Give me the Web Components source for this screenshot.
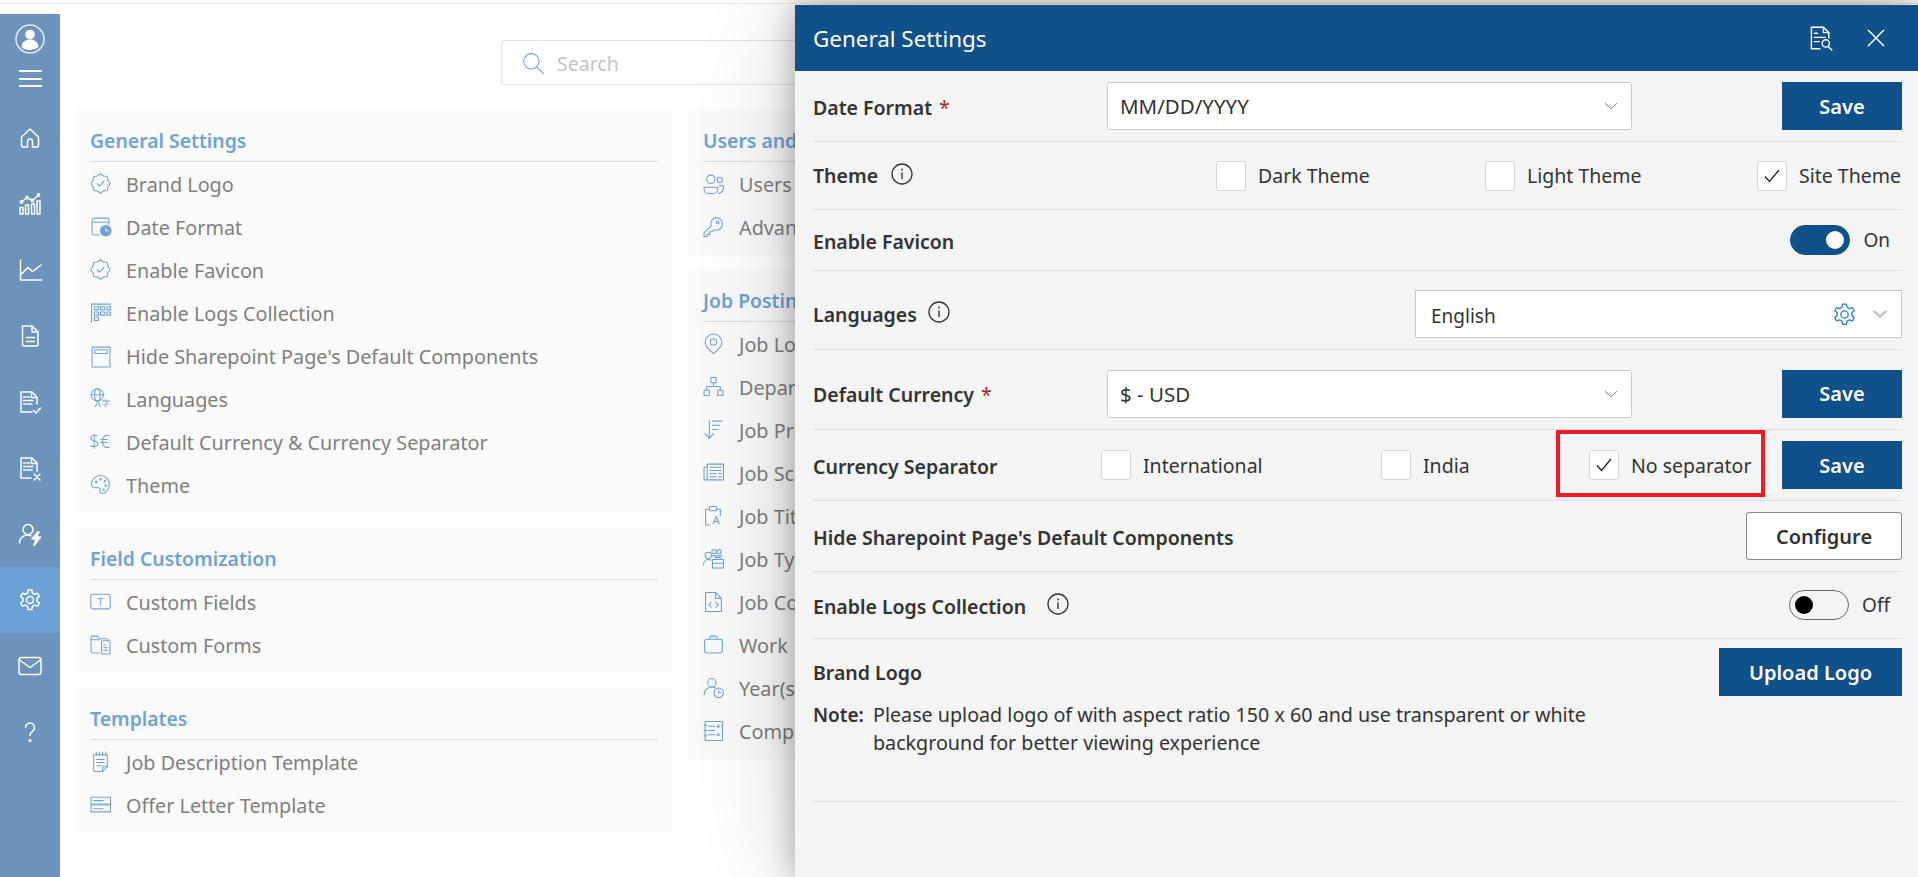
<!DOCTYPE html>
<html>
<head>
<meta charset="utf-8">
<title>General Settings</title>
<style>
	html, body { margin: 0; height: 100%; overflow: hidden; background: #fff; }
	body { font-family: "Noto Sans", "Open Sans", sans-serif; font-size: 19px; color: #333; }
</style>
</head>
<body>
<app-shell>
	<app-sidebar slot="side">
		<nav-item icon="home"></nav-item>
		<nav-item icon="bars"></nav-item>
		<nav-item icon="trend"></nav-item>
		<nav-item icon="doc"></nav-item>
		<nav-item icon="docCheck"></nav-item>
		<nav-item icon="docX"></nav-item>
		<nav-item icon="userBolt"></nav-item>
		<nav-item icon="gear" active></nav-item>
		<nav-item icon="mail"></nav-item>
		<nav-item icon="help"></nav-item>
	</app-sidebar>

	<search-box placeholder="Search"></search-box>

	<card-columns>
		<div>
			<settings-card heading="General Settings">
				<settings-link icon="badge">Brand Logo</settings-link>
				<settings-link icon="calClock">Date Format</settings-link>
				<settings-link icon="badge">Enable Favicon</settings-link>
				<settings-link icon="logs">Enable Logs Collection</settings-link>
				<settings-link icon="window">Hide Sharepoint Page's Default Components</settings-link>
				<settings-link icon="lang">Languages</settings-link>
				<settings-link icon="currency">Default Currency &amp; Currency Separator</settings-link>
				<settings-link icon="palette">Theme</settings-link>
			</settings-card>
			<settings-card heading="Field Customization">
				<settings-link icon="textBox">Custom Fields</settings-link>
				<settings-link icon="folderForm">Custom Forms</settings-link>
			</settings-card>
			<settings-card heading="Templates">
				<settings-link icon="note">Job Description Template</settings-link>
				<settings-link icon="letter">Offer Letter Template</settings-link>
			</settings-card>
		</div>
		<div>
			<settings-card heading="Users and Roles">
				<settings-link icon="users">Users</settings-link>
				<settings-link icon="key">Advanced</settings-link>
			</settings-card>
			<settings-card heading="Job Posting">
				<settings-link icon="pin">Job Location</settings-link>
				<settings-link icon="org">Department</settings-link>
				<settings-link icon="sort">Job Priority</settings-link>
				<settings-link icon="news">Job Schedule</settings-link>
				<settings-link icon="clipA">Job Title</settings-link>
				<settings-link icon="team">Job Type</settings-link>
				<settings-link icon="code">Job Code</settings-link>
				<settings-link icon="case">Work</settings-link>
				<settings-link icon="userClock">Year(s)</settings-link>
				<settings-link icon="book">Company</settings-link>
			</settings-card>
		</div>
	</card-columns>

	<settings-dialog slot="overlay" heading="General Settings">
		<setting-row style="height:71px; grid-template-columns:294px 525px 1fr">
			<b>Date Format<req-mark></req-mark></b>
			<select-box>MM/DD/YYYY</select-box>
			<action-button>Save</action-button>
		</setting-row>
		<setting-row style="height:68px; grid-template-columns:403px 269px 272px 1fr">
			<b style="padding-top:0">Theme<info-dot></info-dot></b>
			<check-option>Dark Theme</check-option>
			<check-option>Light Theme</check-option>
			<check-option checked>Site Theme</check-option>
		</setting-row>
		<setting-row style="height:61px; grid-template-columns:1fr auto">
			<b>Enable Favicon</b>
			<toggle-switch on>On</toggle-switch>
		</setting-row>
		<setting-row style="height:79px; padding-top:8px; grid-template-columns:602px 1fr">
			<b style="padding-top:0">Languages<info-dot style="margin-left:11px"></info-dot></b>
			<language-box>English</language-box>
		</setting-row>
		<setting-row style="height:80px; padding-top:8px; grid-template-columns:294px 525px 1fr">
			<b>Default Currency<req-mark></req-mark></b>
			<select-box>$ - USD</select-box>
			<action-button>Save</action-button>
		</setting-row>
		<setting-row style="height:71px; grid-template-columns:288px 280px 208px 193px 120px">
			<b>Currency Separator</b>
			<check-option>International</check-option>
			<check-option>India</check-option>
			<check-option checked marked>No separator</check-option>
			<action-button>Save</action-button>
		</setting-row>
		<setting-row style="height:71px; grid-template-columns:1fr auto">
			<b>Hide Sharepoint Page's Default Components</b>
			<action-button outline>Configure</action-button>
		</setting-row>
		<setting-row style="height:67px; grid-template-columns:1fr auto">
			<b>Enable Logs Collection<info-dot style="margin-left:21px"></info-dot></b>
			<toggle-switch>Off</toggle-switch>
		</setting-row>
		<brand-row></brand-row>
	</settings-dialog>
</app-shell>

<script>
	// stroke icons, all drawn in a 20 x 20 box unless the entry says otherwise
	function scallop() {
		let d = 'M';
		for(let i = 0; i < 16; i++) {
			let a = (i * Math.PI) / 8 - Math.PI / 2;
			let r = i % 2 ? 7.7 : 9.3;
			d += (10 + r * Math.cos(a)).toFixed(2) + ' ' + (10 + r * Math.sin(a)).toFixed(2) + (i < 15 ? 'L' : 'Z');
		}
		return d;
	}

	const ICONS = {
		home: '<path d="M3.5 11 12 3l8.5 8v8.5A1.5 1.5 0 0 1 19 21h-4.5v-5.5a2.5 2.5 0 0 0-5 0V21H5a1.5 1.5 0 0 1-1.5-1.5Z"/>',
		bars: '<path d="M2 15.5h3V22H2zM7.5 13h3v9h-3zM13.5 12h3v10h-3zM19 9h3v13h-3z"/><path d="M3.5 10 9 5.5l5.5 3L20.500 3"/><circle cx="3.500" cy="10" r="1.200"/><circle cx="9" cy="5.500" r="1.200"/><circle cx="14.500" cy="8.500" r="1.200"/><circle cx="20.500" cy="3" r="1.200"/>',
		trend: '<path d="M2.500 2v20h21"/><path d="M3 16.500 10 9.500l4.500 4L23 7"/>',
		doc: '<path d="M4.500 2h9.500l6 6v12.500a1.500 1.500 0 0 1-1.500 1.500H6a1.500 1.500 0 0 1-1.500-1.500Z"/><path d="M14 2v6h6M8.500 13.500h8M8.500 17.500h8"/>',
		docCheck: '<path d="M14 22H3V2h11l5 5v7"/><path d="M13.500 2v5.500H19M5.500 7h2M9 7h2.500M5.500 10.500h2M9 10.500h6M5.500 14h2M9 14h5M15.500 20.500l2.500 2.500 4.500-5"/>',
		docX: '<path d="M13 22H3V2h11l5 5v8"/><path d="M13.500 2v5.500H19M5.500 7h2M9 7h2.500M5.500 10.500h2M9 10.500h6M5.500 14h2M9 14h5M16 18l6 6M22 18l-6 6"/>',
		userBolt: '<circle cx="10" cy="7.500" r="5"/><path d="M1.500 21c0-4.500 3.500-8 8-8 1.500 0 2.500.3 3.500.8"/><path d="M19.500 10l-5.500 7h4l-2 6.500 6.500-8.500h-4l2.500-5Z" fill="#fff"/>',
		gear: '<path d="M10.200 2h3.600l.6 3 2.200 1.300 2.900-1 1.800 3.100-2.300 2a6 6 0 0 1 0 2.600l2.300 2-1.800 3.100-2.900-1-2.200 1.300-.6 3h-3.600l-.6-3-2.200-1.300-2.900 1-1.800-3.100 2.300-2a6 6 0 0 1 0-2.600l-2.300-2 1.800-3.100 2.900 1 2.200-1.300Z" stroke-linejoin="round"/><circle cx="12" cy="12" r="3.500"/>',
		mail: '<rect x="1" y="3.500" width="22" height="17" rx="2.500"/><path d="M1.500 6 12 13.500 22.500 6"/>',
		help: '<path d="M7.500 7.500a4.500 4.500 0 1 1 7 3.800c-1.500 1-2.500 2-2.500 4.200"/><circle cx="12" cy="20.500" r=".8" fill="#fff"/>',

		badge: '<path d="' + scallop() + '"/><path d="M6.700 10.200 9 12.500l4.300-4.600"/>',
		calClock: '<path d="M18 8V3.800A1.800 1.800 0 0 0 16.200 2H3.800A1.800 1.800 0 0 0 2 3.800v12.400A1.800 1.800 0 0 0 3.800 18H9"/><path d="M2 6h16"/><circle cx="15" cy="14" r="5.500" fill="currentColor" stroke="none"/><path d="M15 11.500V14h2.500" stroke="#fff"/>',
		logs: '<path d="M1.500 1.500v18M1.500 2h18"/><path d="M4 4.500h4v3H4zM10 4.500h4v3h-4zM16 4.500h3.500v3H16zM4 9.500h4v3H4zM10 9.500h4v3h-4zM16 9.500h3.500v3H16zM4 14.500h4v3H4z"/>',
		window: '<rect x="2" y="2" width="17" height="19"/><rect x="4.500" y="4.500" width="12" height="3.500"/>',
		lang: '<circle cx="7" cy="6.500" r="5.800"/><ellipse cx="7" cy="6.500" rx="2.600" ry="5.800"/><path d="M1.200 6.500h11.600"/><text x="4.500" y="18" class="g" font-size="9">A</text><text x="11" y="17.500" class="g" font-size="8">字</text>',
		currency: '<text x="-1" y="16.500" class="g" font-size="18" font-weight="300">$€</text>',
		palette: '<path d="M10 1.500c5 0 8.500 3.800 8.500 8.500S15 18.500 11.500 18.500c-2 0-2.500-1.500-2-3 .5-2-1-3-3-2.500-2.500.5-5-.5-5-3.500C1.500 5.500 5.500 1.500 10 1.500Z"/><circle cx="6" cy="7.500" r=".7"/><circle cx="10" cy="5" r=".7"/><circle cx="14" cy="7" r=".7"/><circle cx="15" cy="11" r=".7"/><circle cx="13" cy="15" r=".7"/>',
		textBox: '<rect x="0.700" y="3" width="18.600" height="14" rx="2.500"/><text x="10" y="14" text-anchor="middle" class="g" font-size="10" font-family="Liberation Serif">T</text>',
		folderForm: '<path d="M9 18H2.500A1.500 1.500 0 0 1 1 16.500v-13A1.500 1.500 0 0 1 2.500 2H7l2 2.500h7A1.500 1.500 0 0 1 17.500 6"/><path d="M1 5.500h8"/><rect x="11" y="6.500" width="8" height="12.500" rx="1"/><path d="M13 10.500h2M13 13h4M13 15.500h4"/>',
		note: '<path d="M3.500 3.500h13V15l-4.500 4.500H5a1.500 1.500 0 0 1-1.500-1.500Z"/><path d="M12 19.500V15h4.500M6 1v3.500M9 1v3.500M12 1v3.500M15 1v3.500M6.500 8h7M6.500 11h7M6.500 14h4"/>',
		letter: '<rect x="1" y="3" width="18.500" height="6.500"/><rect x="1" y="10.500" width="18.500" height="6.500"/><path d="M3.500 6.300h9M3.500 14h9"/>',
		users: '<circle cx="7.500" cy="6" r="4"/><circle cx="16" cy="6.500" r="2.500"/><path d="M1 13.500h13v2a4 4 0 0 1-4 4H5a4 4 0 0 1-4-4Z"/><path d="M15.500 12h2.500a1.500 1.500 0 0 1 1.500 1.500c0 3-2 5.500-5 6"/>',
		key: '<path d="M12.500 1.500a6 6 0 0 1 0 12c-.7 0-1.400-.1-2-.3L8.500 15H6.500v2.500H4v2H1v-3.500l6.800-6.500a6 6 0 0 1 4.700-8Z"/><circle cx="14" cy="6" r="1.300"/>',
		pin: '<path d="M10 19.500C6 16.500 2 13 2 9a8 8 0 0 1 16 0c0 4-4 7.500-8 10.500Z"/><circle cx="10" cy="8.500" r="3"/>',
		org: '<rect x="7.500" y="1.500" width="5" height="5"/><rect x="1" y="13.500" width="5" height="5"/><rect x="14" y="13.500" width="5" height="5"/><path d="M10 6.500V10M3.500 13.500V10h13v3.500"/>',
		sort: '<path d="M6 1v17M2 14l4 4.500 4-4.500M9 2h9M9 6h7M9 10h4.500"/>',
		news: '<path d="M4 2h15.500v15H4z"/><path d="M4 5H1v11a1 1 0 0 0 1 1h2M6.500 5h10.500M6.500 8h10.500M6.500 11h6M6.500 14h6M15 11h2.500M15 14h2.500"/>',
		clipA: '<path d="M6.500 19H2.500V4H6M13 4h3.500v6"/><rect x="6" y="1.500" width="7" height="4" rx="1"/><text x="9" y="18" class="g" font-size="11">A</text>',
		team: '<circle cx="5" cy="7" r="3"/><circle cx="10.500" cy="3.500" r="2"/><circle cx="15.500" cy="3.500" r="2"/><path d="M.5 16c0-3 2-5 4.500-5 1 0 1.800.3 2.500.7M8 7.500h10"/><rect x="9" y="11" width="10.500" height="8"/><path d="M12 11V9h4.500v2M9 14.500h10.500"/>',
		code: '<path d="M2.500 1.500h9.500l5.500 5.500v12.500h-15Z"/><path d="M12 1.500V7h5.500M8 10.500 5.500 13 8 15.500M12 10.500l2.500 2.500-2.500 2.500"/>',
		case: '<rect x="1.500" y="5" width="17" height="13" rx="2.500"/><path d="M6.500 5V3.500A1.500 1.500 0 0 1 8 2h4a1.500 1.500 0 0 1 1.500 1.500V5"/>',
		userClock: '<circle cx="8.500" cy="5.500" r="4"/><path d="M1 17c0-4 3-7.500 7.500-7.500 1.500 0 2.500.3 3.500.8"/><circle cx="15" cy="15" r="4.500"/><path d="M15 12.500V15h2.500"/>',
		book: '<rect x="2" y="1.500" width="16.500" height="18"/><path d="M1 5h2.500M1 10h2.500M1 15h2.500M5 6h6M5 10h6M5 14h6"/><circle cx="14.500" cy="6" r="1"/><circle cx="14.500" cy="14" r="1"/>',
		search: '<circle cx="8.500" cy="8.500" r="7"/><path d="m13.500 13.500 6 6"/>',
		docSearch: '<path d="M9 19H2V1h10l4.500 4.500V10"/><path d="M12 1v4.500h4.500M4.500 6h2.500M4.500 9.500h9M4.500 13h4"/><circle cx="14" cy="14.500" r="3"/><path d="m16 17 3 3"/>',
		close: '<path d="M1.500 1.500l17 17M18.500 1.500l-17 17"/>',
		chevron: '<path d="M2 6.500 10 14l8-7.500"/>'
	};

	class IconGlyph extends HTMLElement {
		connectedCallback() {
			let size = this.getAttribute('size') || 20;
			let box = this.getAttribute('box') || 20;
			let weight = this.getAttribute('weight') || 1;
			let shadow = this.shadowRoot || this.attachShadow({mode: 'open'});
			shadow.innerHTML = `<style>
					:host { display: inline-flex; flex: none; line-height: 0; }
					svg { fill: none; stroke: currentColor; stroke-linecap: round; stroke-linejoin: round; overflow: visible; }
					.g { fill: currentColor; stroke: none; font-family: "Noto Sans", "Noto Sans CJK SC", sans-serif; }
				</style>
				<svg width="${size}" height="${size}" viewBox="0 0 ${box} ${box}" stroke-width="${weight}">${ICONS[this.getAttribute('name')]}</svg>`;
		}
	}
	customElements.define('icon-glyph', IconGlyph);

	class AppShell extends HTMLElement {
		constructor() {
			super();
			let shadow = this.attachShadow({mode: 'open'});
			shadow.innerHTML = `<style>
					:host { display: flex; height: 100vh; position: relative; overflow: hidden; box-sizing: border-box; padding-top: 3px; }
					.strip { position: absolute; left: 0; right: 0; top: 3px; height: 1px; background: #fbe8da; }
					main { flex: 1; min-width: 0; padding: 37px 15px 0; }
				</style>
				<div class="strip"></div>
				<slot name="side"></slot>
				<main><slot></slot></main>
				<slot name="overlay"></slot>`;
		}
	}
	customElements.define('app-shell', AppShell);

	class AppSidebar extends HTMLElement {
		constructor() {
			super();
			let shadow = this.attachShadow({mode: 'open'});
			shadow.innerHTML = `<style>
					:host { display: flex; flex-direction: column; flex: none; width: 60px; margin-top: 11px; background: #6b93bb; color: #fff; }
					.top { height: 91px; display: flex; flex-direction: column; align-items: center; }
					.avatar { margin-top: 10px; width: 30px; height: 30px; }
					.burger { margin-top: 16px; width: 23px; height: 17px; border-top: 2px solid #fff; border-bottom: 2px solid #fff; box-sizing: border-box; position: relative; }
					.burger::after { content: ""; position: absolute; left: 0; right: 0; top: 5.5px; height: 2px; background: #fff; }
				</style>
				<div class="top">
					<svg class="avatar" viewBox="0 0 30 30">
						<circle cx="15" cy="15" r="14" fill="none" stroke="#fff" stroke-opacity=".8" stroke-width="1.500"/>
						<circle cx="15" cy="10.500" r="4.800" fill="#fff"/>
						<path d="M6.500 23c.500-5.500 4-7.500 8.500-7.500s8 2 8.500 7.500a13 13 0 0 1-17 0Z" fill="#fff"/>
					</svg>
					<div class="burger"></div>
				</div>
				<slot></slot>`;
		}
	}
	customElements.define('app-sidebar', AppSidebar);

	class NavItem extends HTMLElement {
		connectedCallback() {
			let shadow = this.attachShadow({mode: 'open'});
			shadow.innerHTML = `<style>
					:host { display: flex; height: 66px; align-items: center; justify-content: center; }
					:host([active]) { background: #6ca1d5; }
				</style>
				<icon-glyph name="${this.getAttribute('icon')}" size="24" box="24" weight="1.500"></icon-glyph>`;
		}
	}
	customElements.define('nav-item', NavItem);

	class SearchBox extends HTMLElement {
		connectedCallback() {
			let shadow = this.attachShadow({mode: 'open'});
			shadow.innerHTML = `<style>
					:host { display: flex; align-items: center; gap: 13px; box-sizing: border-box; width: 976px; height: 45px; margin: 0 0 25px 426px; padding: 0 0 0 20px; border: 1px solid #e3e3e3; border-radius: 3px; color: #6fa3d6; }
					span { color: #c4c4c4; font-size: 19.500px; padding-top: 2px; }
				</style>
				<icon-glyph name="search" size="22"></icon-glyph>
				<span>${this.getAttribute('placeholder')}</span>`;
		}
	}
	customElements.define('search-box', SearchBox);

	class CardColumns extends HTMLElement {
		constructor() {
			super();
			let shadow = this.attachShadow({mode: 'open'});
			shadow.innerHTML = `<style>
					:host { display: grid; grid-template-columns: 598px 598px; gap: 15px; }
				</style>
				<slot></slot>`;
		}
	}
	customElements.define('card-columns', CardColumns);

	class SettingsCard extends HTMLElement {
		connectedCallback() {
			let shadow = this.attachShadow({mode: 'open'});
			shadow.innerHTML = `<style>
					:host { display: block; background: #fafafa; padding: 0 15px 7px; margin-bottom: 15px; }
					h2 { margin: 0; height: 52px; box-sizing: border-box; padding-top: 17px; line-height: 28px; font-size: 19.400px; font-weight: 600; color: #6fa3d6; border-bottom: 1px solid #ddd; white-space: nowrap; }
				</style>
				<h2>${this.getAttribute('heading')}</h2>
				<slot></slot>`;
		}
	}
	customElements.define('settings-card', SettingsCard);

	class SettingsLink extends HTMLElement {
		connectedCallback() {
			let shadow = this.attachShadow({mode: 'open'});
			shadow.innerHTML = `<style>
					:host { display: flex; align-items: center; gap: 15px; height: 43px; color: #6fa3d6; }
					span { color: #7f7f7f; font-size: 19.800px; white-space: nowrap; padding-top: 2px; }
				</style>
				<icon-glyph name="${this.getAttribute('icon')}" size="21"></icon-glyph>
				<span><slot></slot></span>`;
		}
	}
	customElements.define('settings-link', SettingsLink);

	class SettingsDialog extends HTMLElement {
		connectedCallback() {
			let shadow = this.attachShadow({mode: 'open'});
			shadow.innerHTML = `<style>
					:host { position: absolute; left: 795px; right: 0; top: 5px; bottom: 0; background: #f4f4f4; box-shadow: 0 0 30px rgba(0,0,0,.32), 0 0 110px rgba(0,0,0,.16); }
					header { display: flex; align-items: center; height: 66px; padding: 0 33px 0 18px; background: #10508b; color: #fff; font-size: 22.400px; }
					header span { flex: 1; }
					.tool { margin-right: 34px; }
					.body { padding: 0 16px 0 18px; }
				</style>
				<header>
					<span>${this.getAttribute('heading')}</span>
					<icon-glyph class="tool" name="docSearch" size="24" weight="1.200"></icon-glyph>
					<icon-glyph name="close" size="18" weight="1.600"></icon-glyph>
				</header>
				<div class="body"><slot></slot></div>`;
		}
	}
	customElements.define('settings-dialog', SettingsDialog);

	class SettingRow extends HTMLElement {
		constructor() {
			super();
			let shadow = this.attachShadow({mode: 'open'});
			shadow.innerHTML = `<style>
					:host { display: grid; align-items: center; box-sizing: border-box; border-bottom: 1px solid #ddd; color: #333; }
					::slotted(b) { font-weight: 600; font-size: 19.500px; display: flex; align-items: center; white-space: nowrap; padding-top: 2px; }
				</style>
				<slot></slot>`;
		}
	}
	customElements.define('setting-row', SettingRow);

	class ReqMark extends HTMLElement {
		constructor() {
			super();
			let shadow = this.attachShadow({mode: 'open'});
			shadow.innerHTML = `<style>
					:host { display: inline-block; margin-left: 7px; color: #a4262c; font-weight: 400; }
				</style>*`;
		}
	}
	customElements.define('req-mark', ReqMark);

	class InfoDot extends HTMLElement {
		constructor() {
			super();
			let shadow = this.attachShadow({mode: 'open'});
			shadow.innerHTML = `<style>
					:host { display: inline-flex; margin-left: 13px; margin-top: -4px; line-height: 0; }
				</style>
				<svg width="22" height="22" viewBox="0 0 22 22" fill="none" stroke="#333" stroke-width="1.300">
					<circle cx="11" cy="11" r="10"/>
					<path d="M11 9.500v6.500" stroke-width="1.400"/>
					<circle cx="11" cy="6.500" r=".9" fill="#333" stroke="none"/>
				</svg>`;
		}
	}
	customElements.define('info-dot', InfoDot);

	class SelectBox extends HTMLElement {
		constructor() {
			super();
			let shadow = this.attachShadow({mode: 'open'});
			shadow.innerHTML = `<style>
					:host { display: flex; align-items: center; justify-content: space-between; box-sizing: border-box; height: 48px; padding: 0 13px 0 12px; background: #fff; border: 1px solid #ccc; border-radius: 3px; color: #7a7a7a; }
					span { color: #333; font-size: 20.500px; }
				</style>
				<span><slot></slot></span>
				<icon-glyph name="chevron" size="14" weight="1.400"></icon-glyph>`;
		}
	}
	customElements.define('select-box', SelectBox);

	class LanguageBox extends HTMLElement {
		constructor() {
			super();
			let shadow = this.attachShadow({mode: 'open'});
			shadow.innerHTML = `<style>
					:host { display: flex; align-items: center; box-sizing: border-box; height: 48px; padding: 0 14px 0 15px; background: #fff; border: 1px solid #ccc; }
					span { flex: 1; color: #333; padding-top: 3px; }
					.gear { color: #2f7fd1; margin-right: 16px; }
					.more { color: #bcbcbc; }
				</style>
				<span><slot></slot></span>
				<icon-glyph class="gear" name="gear" size="25" box="24" weight="1.300"></icon-glyph>
				<icon-glyph class="more" name="chevron" size="14" weight="3.200"></icon-glyph>`;
		}
	}
	customElements.define('language-box', LanguageBox);

	class ActionButton extends HTMLElement {
		constructor() {
			super();
			let shadow = this.attachShadow({mode: 'open'});
			shadow.innerHTML = `<style>
					:host { display: flex; align-items: center; justify-content: center; justify-self: end; box-sizing: border-box; height: 48px; width: 120px; background: #10508b; color: #fff; font-weight: 600; font-size: 20px; white-space: nowrap; }
					:host([outline]) { width: 156px; background: #fff; color: #333; border: 1px solid #8a8a8a; border-radius: 3px; }
				</style>
				<slot></slot>`;
		}
	}
	customElements.define('action-button', ActionButton);

	class CheckOption extends HTMLElement {
		connectedCallback() {
			let tick = this.hasAttribute('checked') ? '<svg width="16" height="14" viewBox="0 0 16 14" fill="none" stroke="#222" stroke-width="1.300"><path d="M1 7.500l4.500 5L15 1"/></svg>' : '';
			let shadow = this.attachShadow({mode: 'open'});
			shadow.innerHTML = `<style>
					:host { display: flex; align-items: center; gap: 12px; position: relative; white-space: nowrap; font-size: 19.500px; height: 30px; }
					.box { display: flex; align-items: center; justify-content: center; box-sizing: border-box; flex: none; width: 30px; height: 30px; background: #fff; border: 1px solid #d6d6d6; border-radius: 3px; }
					/* red callout from the original screenshot, lies over the row */
					.mark { position: absolute; left: -33px; top: -20px; width: 209px; height: 67px; box-sizing: border-box; border: 4px solid #ed1c24; }
				</style>
				<div class="box">${tick}</div>
				<span><slot></slot></span>
				${this.hasAttribute('marked') ? '<div class="mark"></div>' : ''}`;
		}
	}
	customElements.define('check-option', CheckOption);

	class ToggleSwitch extends HTMLElement {
		constructor() {
			super();
			let shadow = this.attachShadow({mode: 'open'});
			shadow.innerHTML = `<style>
					:host { display: flex; align-items: center; gap: 13px; padding-right: 12px; }
					.track { display: flex; align-items: center; box-sizing: border-box; width: 60px; height: 30px; padding: 0 5px; border: 1px solid #666; border-radius: 15px; }
					.knob { width: 18px; height: 18px; border-radius: 50%; background: #000; }
					:host([on]) .track { justify-content: flex-end; background: #10508b; border-color: #10508b; }
					:host([on]) .knob { background: #fff; }
				</style>
				<div class="track"><div class="knob"></div></div>
				<span><slot></slot></span>`;
		}
	}
	customElements.define('toggle-switch', ToggleSwitch);

	class BrandRow extends HTMLElement {
		constructor() {
			super();
			let shadow = this.attachShadow({mode: 'open'});
			shadow.innerHTML = `<style>
					:host { display: block; box-sizing: border-box; height: 163px; padding-top: 9px; border-bottom: 1px solid #ddd; color: #333; }
					.head { display: flex; justify-content: space-between; align-items: center; height: 48px; }
					b { font-weight: 600; font-size: 19.500px; }
					.note { display: grid; grid-template-columns: 60px 730px; margin-top: 5px; line-height: 28px; font-size: 19.700px; }
					.note b { font-size: 19px; }
				</style>
				<div class="head"><b>Brand Logo</b><action-button style="width:183px">Upload Logo</action-button></div>
				<div class="note">
					<b>Note:</b>
					<span>Please upload logo of with aspect ratio 150 x 60 and use transparent or white background for better viewing experience</span>
				</div>`;
		}
	}
	customElements.define('brand-row', BrandRow);
</script>
</body>
</html>
